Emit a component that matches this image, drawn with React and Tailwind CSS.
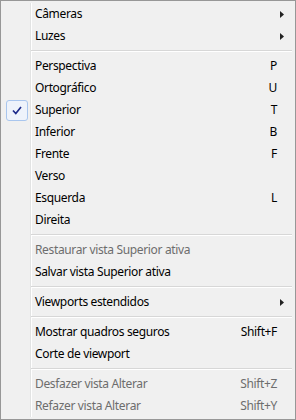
import React from "react";

const Arrow = () => (
  <svg width="4" height="7" viewBox="0 0 4 7" className="block">
    <path d="M0 0 L4 3.5 L0 7 Z" fill="#222" />
  </svg>
);

const Check = () => (
  <div className="absolute left-[3px] top-[1px] w-[22px] h-[21px] rounded-[3px] border border-[#a9c6ee] bg-[#eef3fb] flex items-center justify-center">
    <svg width="10" height="9" viewBox="0 0 10 9">
      <path d="M1 4.5 L3.8 7.5 L9 1" stroke="#1c2a8a" strokeWidth="1.7" fill="none" />
    </svg>
  </div>
);

function Item({ label, shortcut, sub, disabled, checked }) {
  return (
    <div className="relative h-[22px] flex items-center">
      {checked && <Check />}
      <span className={`pl-[32px] flex-1 ${disabled ? "text-[#6d6d6d]" : "text-black"}`}>{label}</span>
      {shortcut && (
        <span className={`pr-[16px] ${disabled ? "text-[#6d6d6d]" : "text-black"}`}>{shortcut}</span>
      )}
      {sub && (
        <span className="pr-[9px]">
          <Arrow />
        </span>
      )}
    </div>
  );
}

const Sep = () => (
  <div className="h-[8px] flex flex-col justify-center pl-[28px] pr-[1px]">
    <div className="h-px bg-[#d7d7d7]" />
    <div className="h-px bg-white" />
  </div>
);

export default function App() {
  return (
    <div className="w-[296px] h-[420px] border border-[#979797] bg-[#f0f0f0] p-[2px] relative text-[12px] leading-none tracking-[-0.35px]" style={{ fontFamily: '"Noto Sans", "Open Sans", sans-serif' }}>
      <div className="absolute left-[29px] top-[2px] bottom-[2px] w-[2px] flex">
        <div className="w-px bg-[#e2e3e3]" />
        <div className="w-px bg-white" />
      </div>
      <div className="relative">
        <Item label="Câmeras" sub />
        <Item label="Luzes" sub />
        <Sep />
        <Item label="Perspectiva" shortcut="P" />
        <Item label="Ortográfico" shortcut="U" />
        <Item label="Superior" shortcut="T" checked />
        <Item label="Inferior" shortcut="B" />
        <Item label="Frente" shortcut="F" />
        <Item label="Verso" />
        <Item label="Esquerda" shortcut="L" />
        <Item label="Direita" />
        <Sep />
        <Item label="Restaurar vista Superior ativa" disabled />
        <Item label="Salvar vista Superior ativa" />
        <Sep />
        <Item label="Viewports estendidos" sub />
        <Sep />
        <Item label="Mostrar quadros seguros" shortcut="Shift+F" />
        <Item label="Corte de viewport" />
        <Sep />
        <Item label="Desfazer vista Alterar" shortcut="Shift+Z" disabled />
        <Item label="Refazer vista Alterar" shortcut="Shift+Y" disabled />
      </div>
    </div>
  );
}
